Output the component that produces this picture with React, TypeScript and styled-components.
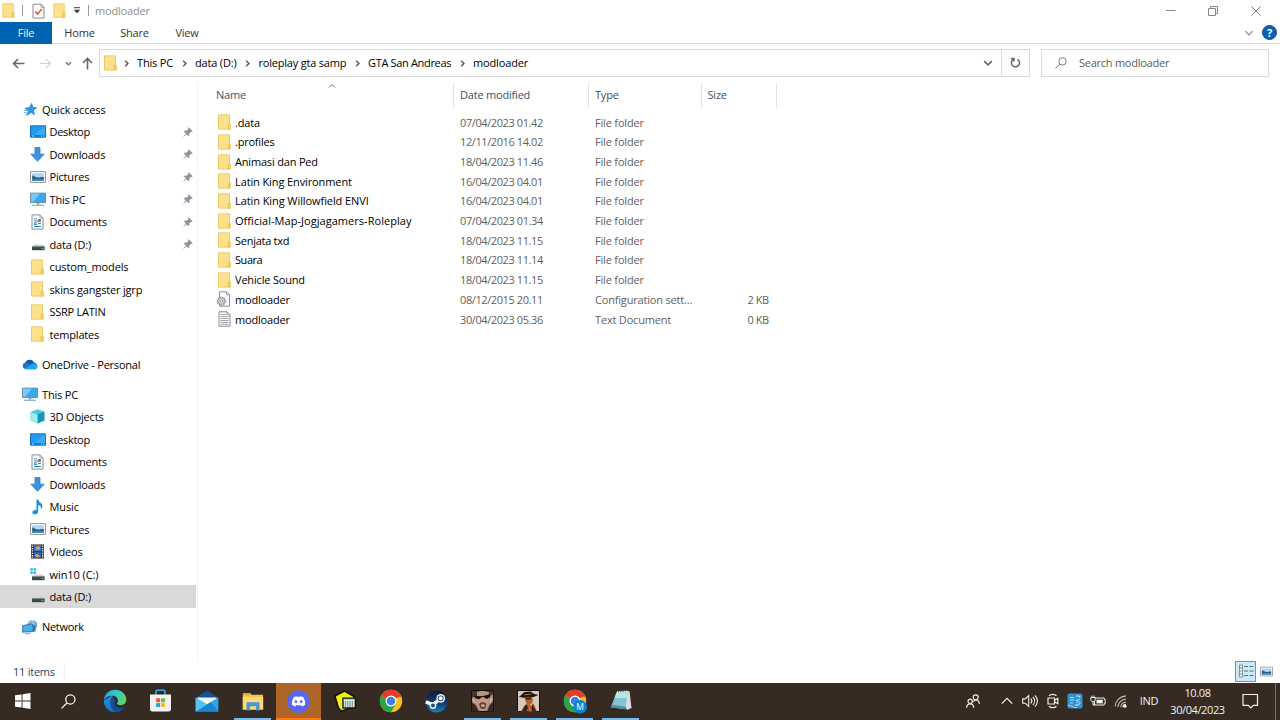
import React from 'react';
import styled, { createGlobalStyle } from 'styled-components';

const Global = createGlobalStyle`
  * { box-sizing: border-box; }
  body { margin: 0; background: #fff; overflow: hidden; }
  svg { display: block; flex: none; }
`;

const Window = styled.div`
  width: 1280px;
  height: 720px;
  display: flex;
  flex-direction: column;
  background: #fff;
  font-family: 'Open Sans', 'Noto Sans', sans-serif;
  font-size: 11px;
  color: #000;
  white-space: nowrap;
  overflow: hidden;
`;

const Text = styled.span<{ $ls?: number }>`
  letter-spacing: ${(p) => p.$ls ?? -0.18}px;
`;

/* ---------- title bar ---------- */
const TitleBar = styled.header`
  height: 22px;
  display: flex;
  align-items: center;
  padding: 0 3px 1px 1px;
  color: #8d8d8d;
`;
const QuickItem = styled.span<{ $w: number }>`
  width: ${(p) => p.$w}px;
  flex: none;
  display: flex;
  justify-content: center;
`;
const Bar = styled.i`
  width: 1px;
  height: 11px;
  background: #9a9a9a;
`;
const Spacer = styled.div`
  flex: 1;
`;
const Caption = styled.button`
  border: 0;
  background: none;
  padding: 0;
  width: 42.5px;
  height: 20px;
  display: flex;
  align-items: center;
  justify-content: center;
`;

/* ---------- ribbon ---------- */
const Ribbon = styled.nav`
  height: 22px;
  display: flex;
  align-items: center;
  border-bottom: 1px solid #dadbdc;
  color: #333;
`;
const Tab = styled.a<{ $w: number; $primary?: boolean }>`
  width: ${(p) => p.$w}px;
  height: 22px;
  display: flex;
  align-items: center;
  justify-content: center;
  letter-spacing: -0.2px;
  background: ${(p) => (p.$primary ? '#0063b1' : 'transparent')};
  color: ${(p) => (p.$primary ? '#e9f3fb' : '#333')};
`;
const Help = styled.span`
  width: 15px;
  height: 15px;
  margin: 0 3px 0 8px;
  border-radius: 50%;
  background: #0a62b8;
  border: 1px solid #08509a;
  color: #fff;
  font-weight: 700;
  font-size: 11px;
  line-height: 13px;
  text-align: center;
`;

/* ---------- address row ---------- */
const AddressRow = styled.div`
  height: 39px;
  display: flex;
  align-items: center;
  padding: 0 11px 1px 0;
`;
const NavButtons = styled.div`
  width: 99px;
  display: flex;
  align-items: center;
  padding-left: 11px;
`;
const Field = styled.div<{ $w: number }>`
  width: ${(p) => p.$w}px;
  height: 28px;
  display: flex;
  align-items: center;
  border: 1px solid #d9d9d9;
`;
const Crumb = styled.span<{ $w: number; $ls: number }>`
  width: ${(p) => p.$w}px;
  padding-bottom: 2px;
  letter-spacing: ${(p) => p.$ls}px;
`;
const ChevronSlot = styled.span`
  width: 16px;
  padding-left: 0.5px;
  display: flex;
`;
const Refresh = styled.div`
  width: 28px;
  height: 26px;
  border-left: 1px solid #d9d9d9;
  display: flex;
  align-items: center;
  justify-content: center;
`;
const SearchText = styled.span`
  padding-bottom: 2px;
  letter-spacing: -0.25px;
  color: #5c5c5c;
`;

/* ---------- body ---------- */
const Body = styled.div`
  height: 577px;
  display: flex;
`;
const Sidebar = styled.aside`
  width: 198px;
  height: 577px;
  padding-top: 14.75px;
  border-right: 1px solid #f3f3f3;
`;
const TreeRow = styled.div<{ $level: number; $gap?: boolean; $selected?: boolean }>`
  width: 196px;
  height: 22.5px;
  margin-top: ${(p) => (p.$gap ? 7.5 : 0)}px;
  padding: 0 0 0 ${(p) => (p.$level ? 29.5 : 22)}px;
  display: flex;
  align-items: center;
  background: ${(p) => (p.$selected ? '#d9d9d9' : 'transparent')};
`;
const TreeIcon = styled.span`
  width: 16px;
  margin-right: 4px;
  display: flex;
  justify-content: center;
`;
const PinSlot = styled.span`
  margin: 0 3px 0 auto;
`;

const Main = styled.main`
  flex: 1;
`;
const HeaderRow = styled.div`
  height: 24.5px;
  display: flex;
  position: relative;
  color: #3f5068;
`;
const SortMark = styled.span`
  position: absolute;
  left: 130px;
  top: -1px;
`;
const HeadCell = styled.div<{ $w: number; $pad: number }>`
  width: ${(p) => p.$w}px;
  height: 24.5px;
  padding: 0 0 1px ${(p) => p.$pad}px;
  display: flex;
  align-items: center;
  letter-spacing: -0.2px;
  border-right: 1px solid #e3e3e3;
`;
const FileRow = styled.div`
  height: 19.7px;
  display: flex;
  align-items: center;
  color: #5f5f5f;
`;
const FileList = styled.div`
  padding-top: 4.8px;
`;
const NameCell = styled.div`
  width: 262px;
  padding-left: 18px;
  display: flex;
  align-items: center;
  color: #000;
`;
const FileIcon = styled.span`
  width: 16px;
  margin-right: 3px;
  display: flex;
  justify-content: center;
`;
const Cell = styled.div<{ $w: number; $ls: number; $right?: boolean }>`
  width: ${(p) => p.$w}px;
  letter-spacing: ${(p) => p.$ls}px;
  text-align: ${(p) => (p.$right ? 'right' : 'left')};
`;

const StatusBar = styled.footer`
  height: 22.5px;
  display: flex;
  align-items: center;
  padding: 0 4px 0 13px;
  color: #2d3f66;
`;
const StatusDivider = styled.i`
  width: 1px;
  height: 16px;
  margin-left: 9px;
  background: #f1f1f1;
`;
const ViewButton = styled.span<{ $active?: boolean }>`
  width: ${(p) => (p.$active ? 21 : 20)}px;
  height: 21.5px;
  display: flex;
  align-items: center;
  justify-content: center;
  border: 1px solid ${(p) => (p.$active ? '#4aa3c9' : 'transparent')};
  background: ${(p) => (p.$active ? '#c9e9f8' : 'transparent')};
`;

/* ---------- taskbar ---------- */
const Taskbar = styled.div`
  height: 37.5px;
  background: #352b22;
  display: flex;
  color: #f3f1ef;
`;
const Apps = styled.div`
  display: flex;
  gap: 1px;
`;
const AppButton = styled.div<{ $state?: 'open' | 'alert' }>`
  width: 45px;
  height: 37.5px;
  display: flex;
  flex-direction: column;
  align-items: center;
  justify-content: center;
  background: ${(p) => (p.$state === 'alert' ? '#ad6528' : 'transparent')};
  position: relative;
  &::after {
    content: '';
    position: absolute;
    bottom: 0;
    left: ${(p) => (p.$state === 'open' ? 4 : 0)}px;
    right: ${(p) => (p.$state === 'open' ? 4 : 0)}px;
    height: ${(p) => (p.$state ? 2 : 0)}px;
    background: ${(p) => (p.$state === 'alert' ? '#ff7a0a' : '#76b9ed')};
  }
`;
const TrayCell = styled.div<{ $w: number; $ls?: number }>`
  width: ${(p) => p.$w}px;
  display: flex;
  flex-direction: column;
  align-items: center;
  justify-content: center;
  padding-bottom: ${(p) => (p.$ls ? 1 : 0)}px;
  line-height: 17px;
  letter-spacing: ${(p) => p.$ls ?? 0}px;
`;
const Peek = styled.div`
  width: 5px;
  margin-left: 4px;
  border-left: 1px solid #7a736d;
`;

/* ---------- icons ---------- */
const Folder = ({ w = 13, h = 16 }: { w?: number; h?: number }) => (
  <svg width={w} height={h} viewBox="0 0 13 16">
    <path d="M.5.9h11v14.2H.5z" fill="#fde28d" stroke="#ecc967" />
    <path d="M10 10.2h2.5v5H10z" fill="#f6d060" stroke="#e8c056" strokeWidth=".7" />
  </svg>
);

const Star = () => (
  <svg width="13" height="13" viewBox="0 0 13 13">
    <path d="M7.600.4l1.200 3.900 4 .4-3.300 2.500 1 4.500L7 9.400l-3.900 2.900 1.200-4.500L1 5.200l4.300-.4z" fill="#2f9be8" stroke="#1b7fd0" strokeWidth=".7" />
    <path d="M0 7.500h3M0 9.500h2.600M1 11.500h2" stroke="#6bbcf2" />
  </svg>
);
const Desktop = () => (
  <svg width="16" height="13" viewBox="0 0 16 13">
    <path d="M.5.8h15v11.400H.5z" fill="#1f9bf0" stroke="#1272c0" />
    <path d="M1 10h14v1.700H1z" fill="#0d7ad2" />
    <path d="M15 1.200v8.800H4z" fill="#39abf6" />
    <path d="M2 11h2M11 11h1M13 11h1" stroke="#c8ecff" strokeWidth=".9" />
  </svg>
);
const Download = () => (
  <svg width="15" height="15" viewBox="0 0 15 15">
    <path d="M5 .6h5v6.600h4.200L7.500 14.300.8 7.200H5z" fill="#3b93e0" stroke="#2b78c4" strokeWidth=".8" />
  </svg>
);
const Pictures = ({ w = 16, h = 12 }: { w?: number; h?: number }) => (
  <svg width={w} height={h} viewBox="0 0 16 12">
    <path d="M.6.6h14.800v10.800H.6z" fill="#fff" stroke="#8e9297" />
    <path d="M2.200 2.200h11.600v7.600H2.200z" fill="#a9d7f5" />
    <path d="M2.200 4.600c2 0 3 2 5.400 2 2.500 0 4-.9 6.200-.6v3.800H2.200z" fill="#2c5f7c" />
    <path d="M2.200 8.600c4-1 8-.6 11.600-.3v1.500H2.200z" fill="#3c8fcd" />
  </svg>
);
const Monitor = () => (
  <svg width="16" height="15" viewBox="0 0 16 15">
    <path d="M.5 1.100h15v9.400H.5z" fill="#3ba8ee" stroke="#5d7f98" strokeWidth=".8" />
    <path d="M1 1.500h9L3 10H1z" fill="#76c8f8" />
    <path d="M6.500 10.800h3v1.700h-3z" fill="#8fa5b5" />
    <path d="M2 13.300h12" stroke="#8eb3cc" strokeWidth="1.300" />
  </svg>
);
const Documents = () => (
  <svg width="13" height="16" viewBox="0 0 13 16">
    <path d="M1 .9h8l3 3v11.200H1z" fill="#fff" stroke="#8a8d91" />
    <path d="M9 .9v3h3" fill="none" stroke="#8a8d91" strokeWidth=".8" />
    <path d="M3 5h3M7 5.500h3M3 7h7M3 10.500h3M7 9.500h3M3 12.500h7" stroke="#3291d6" strokeWidth="1.200" />
    <path d="M6.800 7h3.200M3 9h3" stroke="#3a4c5c" strokeWidth=".9" />
  </svg>
);
const Drive = ({ win }: { win?: boolean }) => (
  <svg width="16" height="13" viewBox="0 0 16 13">
    {win && <path d="M.3.3h2.500v2.300H.3zM3.500.3H6v2.300H3.500zM.3 3.400h2.500v2.300H.3zM3.500 3.400H6v2.300H3.500z" fill="#19b4ec" />}
    <path d="M4.200 6.600h8.800l1.500 2.200H2.600z" fill="#cfd1d2" />
    <path d="M2 8.600h12.600v3.600H2z" fill="#3f4346" />
    <path d="M2 8.700h12.600" stroke="#77797b" strokeWidth=".8" />
    <path d="M11.400 10.500h2" stroke="#46d668" strokeWidth="1.100" />
  </svg>
);
const Cloud = () => (
  <svg width="16" height="11" viewBox="0 0 16 11">
    <path d="M3.800 10.300A3.400 3.400 0 0 1 3.400 3.600 4.800 4.800 0 0 1 12 3.400a3.500 3.500 0 0 1 .4 6.900z" fill="#1479d2" />
    <path d="M3.400 3.600A4.800 4.800 0 0 1 12 3.400c-3 .1-3.500 2-4.500 2.300C6 4.500 5 3.500 3.400 3.600z" fill="#0b5cae" />
    <path d="M2.200 9.700l8.200-4.500c2.500-.6 5 .5 5.200 2.600a2.700 2.700 0 0 1-2.800 2.500h-9z" fill="#28a3ea" />
  </svg>
);
const Cube = () => (
  <svg width="15" height="15" viewBox="0 0 15 15">
    <path d="M.6 3.200L7.500.6l6.900 2.100v8.800l-6.900 2.900L.6 11.600z" fill="#35b9d3" />
    <path d="M.6 3.200L7.500.6l6.900 2.100-6.900 2.700z" fill="#4cc6da" />
    <path d="M7.500 5.400l6.900-2.700v8.800l-6.900 2.900z" fill="#1796b5" />
    <path d="M.6 3.200l6.900 2.200v9L.6 11.600z" fill="#a5ebf2" />
  </svg>
);
const Music = () => (
  <svg width="13" height="16" viewBox="0 0 13 16">
    <path d="M5.500.5h1.700c.3 2.800 4.400 3.500 4.200 6.700-.1 1.500-.9 2.700-1.800 3.600.8-2.600.3-4-2.400-4.900v6.500c0 1.700-1.600 2.900-3.400 2.900-1.500 0-2.500-.7-2.500-1.800 0-1.700 2.200-2.900 4.200-2.300z" fill="#1592e6" />
  </svg>
);
const Video = () => (
  <svg width="13" height="15" viewBox="0 0 13 15">
    <path d="M0 .4h13v14.200H0z" fill="#3a3a3c" />
    <path d="M3 1.200h7v5.900H3z" fill="#3f77c9" />
    <path d="M3 8h7v5.900H3z" fill="#2e63b8" />
    <path d="M5 3.500l3-1.500 1.500 3.500H5zM3.500 11l3-1 3 2.500-4 .8z" fill="#dba75a" />
    <path d="M1.400 1.500v12.500M11.600 1.500v12.500" stroke="#f1f1f1" strokeWidth="1.300" strokeDasharray="1.300 1.100" />
  </svg>
);
const Network = () => (
  <svg width="16" height="16" viewBox="0 0 16 16">
    <circle cx="10.300" cy="6" r="5" fill="#7fa9c8" />
    <path d="M7 4c2-2.500 4-2.500 5.500-2M10 1.200c2 3 2 6 1 9" stroke="#c7e0f0" fill="none" />
    <path d="M.6 6.600l9-1.600 1.400.8v6.600L.6 13.200z" fill="#46b0ee" stroke="#24699c" strokeWidth=".8" />
    <path d="M11 6l2.500.6v5.600L11 13z" fill="#2377b5" />
    <path d="M3 14.900l6-.8" stroke="#86b4d4" strokeWidth="1.200" />
  </svg>
);
const Pin = () => (
  <svg width="10" height="10" viewBox="0 0 10 10">
    <path d="M5.700.3l4 4-.9.7-.8-.2-1.700 1.700.1 1.800-.9.9-2-2L.5 9.700l-.3-.3 2.600-3-1.900-1.900.9-.9 1.800.1L5.400 2l-.3-.9z" fill="#8a959f" />
  </svg>
);
const ConfigFile = () => (
  <svg width="17" height="16" viewBox="0 0 17 16">
    <path d="M3.500.8h7l3 3v11.400h-10z" fill="#fbfbfb" stroke="#8c9094" />
    <path d="M10.500.8v3h3" fill="none" stroke="#8c9094" strokeWidth=".8" />
    <circle cx="5.400" cy="10.200" r="3.900" fill="#eef1f3" stroke="#89939c" strokeWidth="1.400" strokeDasharray="1.600 .7" />
    <circle cx="5.400" cy="10.200" r="2.900" fill="#dfe4e8" stroke="#8b959e" strokeWidth=".7" />
    <circle cx="5.400" cy="10.200" r="1.200" fill="#fff" stroke="#7f8992" strokeWidth=".8" />
  </svg>
);
const TextFile = () => (
  <svg width="13" height="16" viewBox="0 0 13 16">
    <path d="M1 .8h8l3 3v11.400H1z" fill="#fbfbfb" stroke="#8c9094" />
    <path d="M9 .8v3h3" fill="none" stroke="#8c9094" strokeWidth=".8" />
    <path d="M2.500 3.500h5.500M2.500 5.500h8M2.500 7.500h8M2.500 9.500h8M2.500 11.500h8M2.500 13.300h8" stroke="#9a9da0" strokeWidth=".9" />
  </svg>
);
type ChevronProps = { size?: number; dir?: 'right' | 'down' | 'up'; color?: string; sw?: number };
const Chevron = ({ size = 8, dir = 'right', color = '#555', sw = 1.2 }: ChevronProps) => {
  const d = { right: 'M2.800 1.500L5.300 4 2.800 6.500', down: 'M1 2.500L4 5.500 7 2.500', up: 'M1 5.500L4 2.500 7 5.500' }[dir];
  return (
    <svg width={size} height={size} viewBox="0 0 8 8">
      <path d={d} fill="none" stroke={color} strokeWidth={(sw * 8) / size} />
    </svg>
  );
};
const Arrow = ({ dir, color }: { dir: 'left' | 'right' | 'up'; color: string }) => (
  <svg width="13" height="13" viewBox="0 0 13 13">
    <path
      d={{ left: 'M12.500 6.500H1.500M6 2L1.500 6.500 6 11', right: 'M1 6.500h10.500M7 2l4.500 4.500L7 11', up: 'M6.500 12.500V1.500M2 6l4.500-4.500L11 6' }[dir]}
      fill="none"
      stroke={color}
      strokeWidth={dir === 'right' ? 1.1 : 1.6}
    />
  </svg>
);
const Checklist = () => (
  <svg width="13" height="16" viewBox="0 0 13 16">
    <path d="M1 1.200h8.200L12 4v11H1z" fill="#fdfdfd" stroke="#8a8a8a" />
    <path d="M9 1.200v3h3" fill="none" stroke="#8a8a8a" strokeWidth=".8" />
    <path d="M3.200 8.500L5.500 11l4.300-5" fill="none" stroke="#e0562b" strokeWidth="1.600" />
  </svg>
);

/* ---------- taskbar icons ---------- */
const WindowsLogo = () => (
  <svg width="16" height="16" viewBox="0 0 16 16">
    <path d="M0 2.300L6.600 1.400v6.100H0zM7.500 1.200L15.500 0v7.500h-8zM0 8.400h6.600v6.200L0 13.700zM7.500 8.400h8V16l-8-1.200z" fill="#fff" />
  </svg>
);
const SearchGlyph = ({ size = 16, color = '#fff', sw = 1.3 }: { size?: number; color?: string; sw?: number }) => (
  <svg width={size} height={size} viewBox="0 0 16 16" fill="none" stroke={color} strokeWidth={sw}>
    <circle cx="10" cy="5.800" r="4.900" />
    <path d="M6.600 9.300L.6 15.400" />
  </svg>
);
const Edge = () => (
  <svg width="24" height="24" viewBox="0 0 24 24">
    <defs>
      <linearGradient id="edgeTop" x1="0" x2="1" y1=".3" y2=".5">
        <stop offset="0" stopColor="#2a9fe6" />
        <stop offset=".5" stopColor="#33c4d3" />
        <stop offset="1" stopColor="#62d65c" />
      </linearGradient>
      <linearGradient id="edgeBase" x1="0" x2="1" y1="0" y2="1">
        <stop offset="0" stopColor="#2293e4" />
        <stop offset="1" stopColor="#1462b4" />
      </linearGradient>
    </defs>
    <path d="M.8 11.800C.8 18 5.800 23.300 12 23.300c4 0 7.300-1.700 9.300-5-3.800 1.800-9.600.8-9.900-3.600L9 6.500z" fill="url(#edgeBase)" />
    <path d="M9.200 8C5.800 10.600 6.200 19.500 12.500 23.200c4-.1 7-1.900 8.800-4.900-4.300 2-10 .6-9.900-4 0-1.200.5-2 1.200-2.700z" fill="#114f97" />
    <path d="M.8 11.800C1.200 5 6 .7 12 .7c6.600 0 11.300 4.800 11.300 9.800 0 3.600-2.600 5.700-5.600 5.700-2.500 0-4-.8-3.700-1.900.4-1 1-1.400 1-2.900 0-2.300-2.300-4.600-5.600-4.600C5.500 6.800 2.300 8.500.8 11.800z" fill="url(#edgeTop)" />
  </svg>
);
const Store = () => (
  <svg width="23" height="24" viewBox="0 0 23 24">
    <path d="M7 6V2.500c0-.7.400-1.200 1.100-1.200h6.800c.7 0 1.100.5 1.100 1.200V6" fill="none" stroke="#35b1ee" strokeWidth="1.500" />
    <path d="M1 5.500h21v14.800c0 1.300-.9 2.200-2.200 2.200H3.200C1.900 22.500 1 21.600 1 20.300z" fill="#f3f3f4" />
    <path d="M7.200 9.300h3.900v3.900H7.200z" fill="#f15a29" />
    <path d="M12 9.300h3.900v3.900H12z" fill="#77b82a" />
    <path d="M7.200 14.100h3.900V18H7.200z" fill="#1ba0e2" />
    <path d="M12 14.100h3.900V18H12z" fill="#fbb917" />
  </svg>
);
const Mail = () => (
  <svg width="24" height="23" viewBox="0 0 24 23">
    <path d="M.7 7.800L12 .6l11.300 7.200v4H.7z" fill="#12549c" />
    <path d="M2.500 7.500h19v7h-19z" fill="#f4f6f8" />
    <path d="M.7 7.600l11.300 7 11.300-7v14H.7z" fill="#2ea5e8" />
    <path d="M.7 21.600L12 14.600l4-2.500 7.300 9.500z" fill="#1b87d4" />
    <path d="M.7 7.600l11.300 7L.7 21.600z" fill="#57c3f3" />
  </svg>
);
const Explorer = () => (
  <svg width="22" height="19" viewBox="0 0 22 19">
    <path d="M.8 1.200h7.500l1.300 1.600H21v14.600H.8z" fill="#f3c350" />
    <path d="M.8 5h20.400v12.600H.8z" fill="#fcd879" />
    <path d="M1 1.200h7.300v1.900H1z" fill="#e0a62f" />
    <path d="M4.500 10.200h13v8.200h-3.400v-4.200H7.900v4.200H4.500z" fill="#4797d3" />
  </svg>
);
const Discord = () => (
  <svg width="23" height="23" viewBox="0 0 23 23">
    <circle cx="11.500" cy="11.500" r="11.200" fill="#5865f2" />
    <path d="M6.800 7.200c1-.6 2-.9 2.900-1l.4.800c1-.2 1.900-.2 2.900 0l.4-.8c.9.100 1.900.4 2.900 1 1.400 2.100 2.100 4.600 1.900 7.600-1.100.9-2.300 1.400-3.400 1.600l-.8-1.300c-1.600.6-3.300.6-4.900 0l-.8 1.300c-1.100-.2-2.300-.7-3.400-1.600-.2-3 .5-5.500 1.900-7.600z" fill="#fff" />
    <circle cx="8.900" cy="11.700" r="1.400" fill="#5865f2" />
    <circle cx="14.100" cy="11.700" r="1.400" fill="#5865f2" />
  </svg>
);
const Planner = () => (
  <svg width="22" height="22" viewBox="0 0 22 22">
    <path d="M.9 6L10.500 1l9.700 5.500-1 10.500L7.500 21.200l-3-3.200z" fill="#f2ee12" stroke="#111" strokeWidth="1.500" />
    <path d="M9 8.200h12.300v9.800H9z" fill="#e4f3f3" stroke="#111" strokeWidth="1.400" />
    <path d="M9.700 9.400h10.900" stroke="#8fd3d8" strokeWidth="1.400" />
    <path d="M10.800 12h9M10.800 14h9M10.800 16h9" stroke="#333" strokeWidth="1" strokeDasharray="1.300 1" />
  </svg>
);
const Chrome = ({ badge }: { badge?: boolean }) => (
  <svg width="24" height="26" viewBox="0 0 24 26">
    <circle cx="12" cy="13" r="11.200" fill="#fbc116" />
    <path d="M12 13L2.300 7.400A11.200 11.200 0 0 0 12 24.200l5-8.500z" fill="#2ba24c" />
    <path d="M12 13L2.300 7.400a11.200 11.200 0 0 1 19.400 0z" fill="#e33b2e" />
    <path d="M12 7.400h9.700l.5 1.300H12z" fill="#e33b2e" />
    <circle cx="12" cy="13" r="5.500" fill="#fff" />
    <circle cx="12" cy="13" r="4.300" fill="#3f7fe8" />
    {badge && <circle cx="17.200" cy="18.800" r="6.800" fill="#0d84cf" />}
    {badge && (
      <text x="17.200" y="21.800" fontSize="8.500" fontFamily="Open Sans" textAnchor="middle" fill="#fff">
        M
      </text>
    )}
  </svg>
);
const Steam = () => (
  <svg width="23" height="23" viewBox="0 0 23 23">
    <defs>
      <linearGradient id="steam" x1="0" x2="0" y1="0" y2="1">
        <stop offset="0" stopColor="#10193a" />
        <stop offset=".6" stopColor="#123f74" />
        <stop offset="1" stopColor="#1582bd" />
      </linearGradient>
    </defs>
    <circle cx="11.500" cy="11.500" r="11" fill="url(#steam)" />
    <path d="M.8 11.800l7 2.800 4.600-3.500" fill="none" stroke="#f3f5f7" strokeWidth="3.600" />
    <circle cx="8" cy="15.600" r="3.400" fill="#f3f5f7" />
    <circle cx="8" cy="15.600" r="2" fill="#174d83" />
    <circle cx="15.700" cy="8.300" r="4.400" fill="#f3f5f7" />
    <circle cx="15.700" cy="8.300" r="2.900" fill="#163765" />
    <circle cx="15.700" cy="8.300" r="2.100" fill="#f3f5f7" />
  </svg>
);
const Portrait = () => (
  <svg width="23" height="22" viewBox="0 0 23 22">
    <path d="M.5.500h22v21H.5z" fill="#a58d80" stroke="#15100d" />
    <path d="M1 1h21v3l-3 2H4L1 8z" fill="#4a352d" />
    <path d="M6 2c3-1.500 9-1.500 12 .5l-.5 3.500H6z" fill="#b8937f" />
    <path d="M5 7h13l-.5 7-2.500 5-3.500 2-3.500-2L5.500 14z" fill="#c59a84" />
    <path d="M3 6l8 .2 8.500-1.900-.6 3-3 1.700-3.500-2-1.800.2-2.500 2.100-3.500-1z" fill="#120d0c" />
    <path d="M8 14c1.500-2.500 6-2.500 7.500 0l-1.200 4.200-2.500 1-2.500-1z" fill="#6b3e33" />
    <path d="M10 14.500h3.800l-.5 2.300h-2.800z" fill="#d6b5a6" />
    <path d="M1 12.500l3.500 2.500 3.500 6.500H1zM22 11.500l-3.500 4-2.500 6h6z" fill="#3a2722" />
    <path d="M2 9l2.500 3.500M20.500 8l-1.500 4.500" stroke="#dcc4b6" strokeWidth="1.200" />
  </svg>
);
const Cowboy = () => (
  <svg width="23" height="22" viewBox="0 0 23 22">
    <path d="M.5.5h22v21H.5z" fill="#d9c8bc" stroke="#15100d" />
    <path d="M1.500 6.500c3-.5 4-3.500 6-4.500l6-.5c1.500.8 2.500 2.500 8 3.500l-5 2L6 7.800z" fill="#1e1714" />
    <path d="M7.500 4.800l7-.8" stroke="#c06a20" strokeWidth="1" />
    <path d="M7.500 7.500l8-.4.3 5.200-3 3-3.500-1.800z" fill="#b4622b" />
    <path d="M8 7.800l6-.3-.5 1.900H9z" fill="#2a1a12" />
    <path d="M4 21.500l3-5.500 3.500-2 3 2 3-2.500 3.500 8z" fill="#a8501f" />
    <path d="M9 14l2 3.500-2 4H5zM15 14.500l4 7h-4z" fill="#33201a" />
    <path d="M12 16.500l1.500 5" stroke="#d9853c" />
  </svg>
);
const Notepad = () => (
  <svg width="22" height="22" viewBox="0 0 22 22">
    <path d="M7 2.500L19.500 1l2 17-4.500 2z" fill="#d9dcdd" />
    <path d="M6.500 2.500L18 1.700l-2.800 17.500-14.400-2z" fill="#83c3d3" />
    <path d="M6.500 2.500L18 1.700 17 8 4.500 8z" fill="#b8e2ea" />
    <path d="M.8 17.200l14.400 2 .4-2.500L2 14.700z" fill="#4f93a5" />
    <path d="M7 1.800l11-.7" stroke="#e9eded" strokeWidth="1.400" strokeDasharray="1 .8" />
  </svg>
);

/* ---------- tray icons ---------- */
const People = () => (
  <svg width="14" height="15" viewBox="0 0 14 15" fill="none" stroke="#f1efed" strokeWidth="1.200">
    <circle cx="9.700" cy="3.300" r="2.500" />
    <circle cx="4.200" cy="7.300" r="2.200" />
    <path d="M.6 13.800c.2-2.500 1.600-4 3.600-4s3.400 1.500 3.600 4M7.300 7.600c.7-1.100 1.500-1.600 2.600-1.600 2 0 3.300 1.600 3.500 3.900" />
  </svg>
);
const Volume = () => (
  <svg width="16" height="14" viewBox="0 0 16 14" fill="none" stroke="#f1efed" strokeWidth="1.100">
    <path d="M.7 4.900h2.600L6.700 1.600v10.800L3.300 9.200H.7z" />
    <path d="M8.800 4.700c1.200 1.300 1.200 3.300 0 4.600M10.900 3c2.200 2.300 2.200 5.700 0 8M13 1.300c3.200 3.300 3.200 8.100 0 11.400" />
  </svg>
);
const MeetNow = () => (
  <svg width="12" height="16" viewBox="0 0 12 16" fill="none" stroke="#f1efed" strokeWidth="1.200">
    <path d="M1 5h6.500v6H1zM7.500 7.200L10.800 5.200v5.600L7.500 8.800M2 2.800c2-1.800 5.500-1.800 7.500 0M2 13.200c2 1.800 5.500 1.800 7.500 0" />
  </svg>
);
const BlueApp = () => (
  <svg width="16" height="16" viewBox="0 0 16 16">
    <rect x=".5" y=".5" width="15" height="15" rx="2" fill="#2f92d6" />
    <path d="M3 4.500h4M3 7h4M3 10h3M9 3.500c2-1.500 4 0 4 1.500M8.500 7.500l4.500-1M8 11.500c2 1.500 4 .5 5.500-2M9.500 9.500l3-1" fill="none" stroke="#a8dcf7" strokeWidth="1.200" />
    <path d="M1 12c3 0 5 3 9 2.800" stroke="#e3d37a" fill="none" />
  </svg>
);
const Battery = () => (
  <svg width="16" height="12" viewBox="0 0 16 12">
    <path d="M4.500 3h9.700v1.500h1v4h-1V10H4.500z" fill="none" stroke="#f1efed" strokeWidth="1" />
    <path d="M6.500 4.700h6.300v3.700H6.500z" fill="#f1efed" />
    <path d="M.8 2.500h4.400V5c0 1-1 1.500-2.200 1.500S.8 6 .8 5z" fill="#352b22" stroke="#f1efed" />
    <path d="M2 .6v2M4 .6v2M3 6.500V10h2" stroke="#f1efed" fill="none" />
  </svg>
);
const Wifi = () => (
  <svg width="13" height="13" viewBox="0 0 13 13" fill="none" stroke="#f1efed" strokeWidth="1.100">
    <path d="M1 11.500C1.500 5.500 6 1.300 12 .9M3.800 12C4 8 7.500 4.300 12 4M6.700 12.200c.3-2.800 2.500-4.900 5.300-5.200" opacity=".75" />
    <circle cx="11" cy="11.200" r="1.500" fill="#f1efed" stroke="none" />
    <path d="M9 12.200c0-1.600 1.200-2.700 3-2.900" />
  </svg>
);
const ActionCenter = () => (
  <svg width="17" height="16" viewBox="0 0 17 16">
    <path d="M1 1.500h14.500v10.800h-4.200l-2.500 2.600-2.500-2.600H1z" fill="none" stroke="#f1efed" strokeWidth="1.200" />
  </svg>
);

/* ---------- data ---------- */
type Node = { label: string; icon: React.ReactNode; level?: number; gap?: boolean; pin?: boolean; selected?: boolean; ls?: number };
const tree: Node[] = [
  { label: 'Quick access', icon: <Star />, ls: -0.15 },
  { label: 'Desktop', icon: <Desktop />, level: 1, pin: true, ls: -0.3 },
  { label: 'Downloads', icon: <Download />, level: 1, pin: true },
  { label: 'Pictures', icon: <Pictures />, level: 1, pin: true },
  { label: 'This PC', icon: <Monitor />, level: 1, pin: true },
  { label: 'Documents', icon: <Documents />, level: 1, pin: true },
  { label: 'data (D:)', icon: <Drive />, level: 1, pin: true },
  { label: 'custom_models', icon: <Folder />, level: 1, ls: -0.12 },
  { label: 'skins gangster jgrp', icon: <Folder />, level: 1 },
  { label: 'SSRP LATIN', icon: <Folder />, level: 1, ls: -0.25 },
  { label: 'templates', icon: <Folder />, level: 1 },
  { label: 'OneDrive - Personal', icon: <Cloud />, gap: true, ls: -0.22 },
  { label: 'This PC', icon: <Monitor />, gap: true },
  { label: '3D Objects', icon: <Cube />, level: 1 },
  { label: 'Desktop', icon: <Desktop />, level: 1, ls: -0.3 },
  { label: 'Documents', icon: <Documents />, level: 1 },
  { label: 'Downloads', icon: <Download />, level: 1 },
  { label: 'Music', icon: <Music />, level: 1, ls: -0.1 },
  { label: 'Pictures', icon: <Pictures />, level: 1 },
  { label: 'Videos', icon: <Video />, level: 1 },
  { label: 'win10 (C:)', icon: <Drive win />, level: 1, ls: -0.08 },
  { label: 'data (D:)', icon: <Drive />, level: 1, selected: true },
  { label: 'Network', icon: <Network />, gap: true, ls: -0.3 },
];

type Entry = { name: string; date: string; type: string; size?: string; icon?: React.ReactNode; ls?: number };
const files: Entry[] = [
  { name: '.data', date: '07/04/2023 01.42', type: 'File folder' },
  { name: '.profiles', date: '12/11/2016 14.02', type: 'File folder', ls: -0.22 },
  { name: 'Animasi dan Ped', date: '18/04/2023 11.46', type: 'File folder' },
  { name: 'Latin King Environment', date: '16/04/2023 04.01', type: 'File folder', ls: -0.11 },
  { name: 'Latin King Willowfield ENVI', date: '16/04/2023 04.01', type: 'File folder', ls: -0.08 },
  { name: 'Official-Map-Jogjagamers-Roleplay', date: '07/04/2023 01.34', type: 'File folder', ls: 0.04 },
  { name: 'Senjata txd', date: '18/04/2023 11.15', type: 'File folder', ls: -0.27 },
  { name: 'Suara', date: '18/04/2023 11.14', type: 'File folder', ls: -0.45 },
  { name: 'Vehicle Sound', date: '18/04/2023 11.15', type: 'File folder' },
  { name: 'modloader', date: '08/12/2015 20.11', type: 'Configuration sett...', size: '2 KB', icon: <ConfigFile /> },
  { name: 'modloader', date: '30/04/2023 05.36', type: 'Text Document', size: '0 KB', icon: <TextFile /> },
];

const crumbs = [
  { label: 'This PC', w: 42, ls: -0.18 },
  { label: 'data (D:)', w: 47.5, ls: -0.18 },
  { label: 'roleplay gta samp', w: 93.5, ls: -0.2 },
  { label: 'GTA San Andreas', w: 89, ls: -0.33 },
  { label: 'modloader', w: 60, ls: -0.15 },
];

const apps: { icon: React.ReactNode; state?: 'open' | 'alert' }[] = [
  { icon: <WindowsLogo /> },
  { icon: <SearchGlyph size={15} /> },
  { icon: <Edge /> },
  { icon: <Store /> },
  { icon: <Mail /> },
  { icon: <Explorer />, state: 'open' },
  { icon: <Discord />, state: 'alert' },
  { icon: <Planner /> },
  { icon: <Chrome /> },
  { icon: <Steam /> },
  { icon: <Portrait />, state: 'open' },
  { icon: <Cowboy />, state: 'open' },
  { icon: <Chrome badge />, state: 'open' },
  { icon: <Notepad />, state: 'open' },
];

export default function App() {
  return (
    <Window>
      <Global />
      <TitleBar>
        <QuickItem $w={14}><Folder w={13} h={15} /></QuickItem>
        <QuickItem $w={14}><Bar /></QuickItem>
        <QuickItem $w={18}><Checklist /></QuickItem>
        <QuickItem $w={25}><Folder w={13} h={15} /></QuickItem>
        <QuickItem $w={9}>
          <svg width="8" height="7" viewBox="0 0 8 7"><path d="M1 .7h6" stroke="#333" /><path d="M.8 2.800h6.400L4 6.300z" fill="#333" /></svg>
        </QuickItem>
        <QuickItem $w={14}><Bar /></QuickItem>
        <Text $ls={-0.18}>modloader</Text>
        <Spacer />
        <Caption><svg width="10" height="10" viewBox="0 0 10 10"><path d="M0 4.500h9.500" stroke="#888" /></svg></Caption>
        <Caption>
          <svg width="10" height="10" viewBox="0 0 10 10" fill="none" stroke="#888"><path d="M.5 2.500h7v7h-7zM2.500 2.500v-2h7v7h-2" /></svg>
        </Caption>
        <Caption><svg width="10" height="10" viewBox="0 0 10 10"><path d="M.5.5l9 9M9.500.5l-9 9" stroke="#777" /></svg></Caption>
      </TitleBar>

      <Ribbon>
        <Tab $w={52} $primary>File</Tab>
        <Tab $w={55}>Home</Tab>
        <Tab $w={55}>Share</Tab>
        <Tab $w={50}>View</Tab>
        <Spacer />
        <Chevron dir="down" size={10} color="#888" sw={1.1} />
        <Help>?</Help>
      </Ribbon>

      <AddressRow>
        <NavButtons>
          <QuickItem $w={14}><Arrow dir="left" color="#666" /></QuickItem>
          <QuickItem $w={41}><Arrow dir="right" color="#d2d2d2" /></QuickItem>
          <QuickItem $w={4}><Chevron dir="down" size={7} color="#777" sw={1.5} /></QuickItem>
          <QuickItem $w={34}><Arrow dir="up" color="#666" /></QuickItem>
        </NavButtons>
        <Field $w={931}>
          <QuickItem $w={21}><Folder w={13} h={16} /></QuickItem>
          {crumbs.map((c) => (
            <React.Fragment key={c.label}>
              <ChevronSlot><Chevron size={9} color="#555" sw={1.4} /></ChevronSlot>
              <Crumb $w={c.w} $ls={c.ls}>{c.label}</Crumb>
            </React.Fragment>
          ))}
          <Spacer />
          <QuickItem $w={27}><Chevron dir="down" size={10} color="#666" sw={1.6} /></QuickItem>
          <Refresh>
            <svg width="11" height="12" viewBox="0 0 11 12" fill="none" stroke="#666" strokeWidth="1.500">
              <path d="M7.500 2.400A4 4 0 1 1 3 2.700M1 1.500h3v3" />
            </svg>
          </Refresh>
        </Field>
        <Spacer />
        <Field $w={228}>
          <QuickItem $w={37}><SearchGlyph size={12} color="#777" /></QuickItem>
          <SearchText>Search modloader</SearchText>
        </Field>
      </AddressRow>

      <Body>
        <Sidebar>
          {tree.map((n, i) => (
            <TreeRow key={i} $level={n.level ?? 0} $gap={n.gap} $selected={n.selected}>
              <TreeIcon>{n.icon}</TreeIcon>
              <Text $ls={n.ls}>{n.label}</Text>
              {n.pin && <PinSlot><Pin /></PinSlot>}
            </TreeRow>
          ))}
        </Sidebar>
        <Main>
          <HeaderRow>
            <SortMark><Chevron dir="up" size={8} color="#777" sw={1} /></SortMark>
            <HeadCell $w={256} $pad={18}>Name</HeadCell>
            <HeadCell $w={135} $pad={6}>Date modified</HeadCell>
            <HeadCell $w={112.5} $pad={6}>Type</HeadCell>
            <HeadCell $w={75.5} $pad={6}>Size</HeadCell>
          </HeaderRow>
          <FileList>
            {files.map((f, i) => (
              <FileRow key={i}>
                <NameCell>
                  <FileIcon>{f.icon ?? <Folder />}</FileIcon>
                  <Text $ls={f.ls}>{f.name}</Text>
                </NameCell>
                <Cell $w={135} $ls={-0.4}>{f.date}</Cell>
                <Cell $w={106} $ls={-0.18}>{f.type}</Cell>
                <Cell $w={67.5} $ls={-0.5} $right>{f.size}</Cell>
              </FileRow>
            ))}
          </FileList>
        </Main>
      </Body>

      <StatusBar>
        <Text $ls={-0.25}>11 items</Text>
        <StatusDivider />
        <Spacer />
        <ViewButton $active>
          <svg width="16" height="14" viewBox="0 0 16 14" fill="none">
            <path d="M1.500 1h3v12h-3z" stroke="#8a8f94" fill="#f4f4f4" />
            <path d="M1.500 4h3M1.500 7h3M1.500 10h3" stroke="#8a8f94" />
            <path d="M6 2.500h10M6 7h10M6 11.500h10" stroke="#5b6e7c" strokeDasharray="4 1.500" />
          </svg>
        </ViewButton>
        <ViewButton><Pictures w={13} h={11} /></ViewButton>
      </StatusBar>

      <Taskbar>
        <Apps>
          {apps.map((a, i) => (
            <AppButton key={i} $state={a.state}>{a.icon}</AppButton>
          ))}
        </Apps>
        <Spacer />
        <TrayCell $w={44}><People /></TrayCell>
        <TrayCell $w={24}><Chevron dir="up" size={14} color="#f1efed" sw={1.2} /></TrayCell>
        <TrayCell $w={22}><Volume /></TrayCell>
        <TrayCell $w={23}><MeetNow /></TrayCell>
        <TrayCell $w={22}><BlueApp /></TrayCell>
        <TrayCell $w={23}><Battery /></TrayCell>
        <TrayCell $w={23}><Wifi /></TrayCell>
        <TrayCell $w={34} $ls={-0.2}>IND</TrayCell>
        <TrayCell $w={63} $ls={-0.4}>
          <span>10.08</span>
          <span>30/04/2023</span>
        </TrayCell>
        <TrayCell $w={42}><ActionCenter /></TrayCell>
        <Peek />
      </Taskbar>
    </Window>
  );
}
